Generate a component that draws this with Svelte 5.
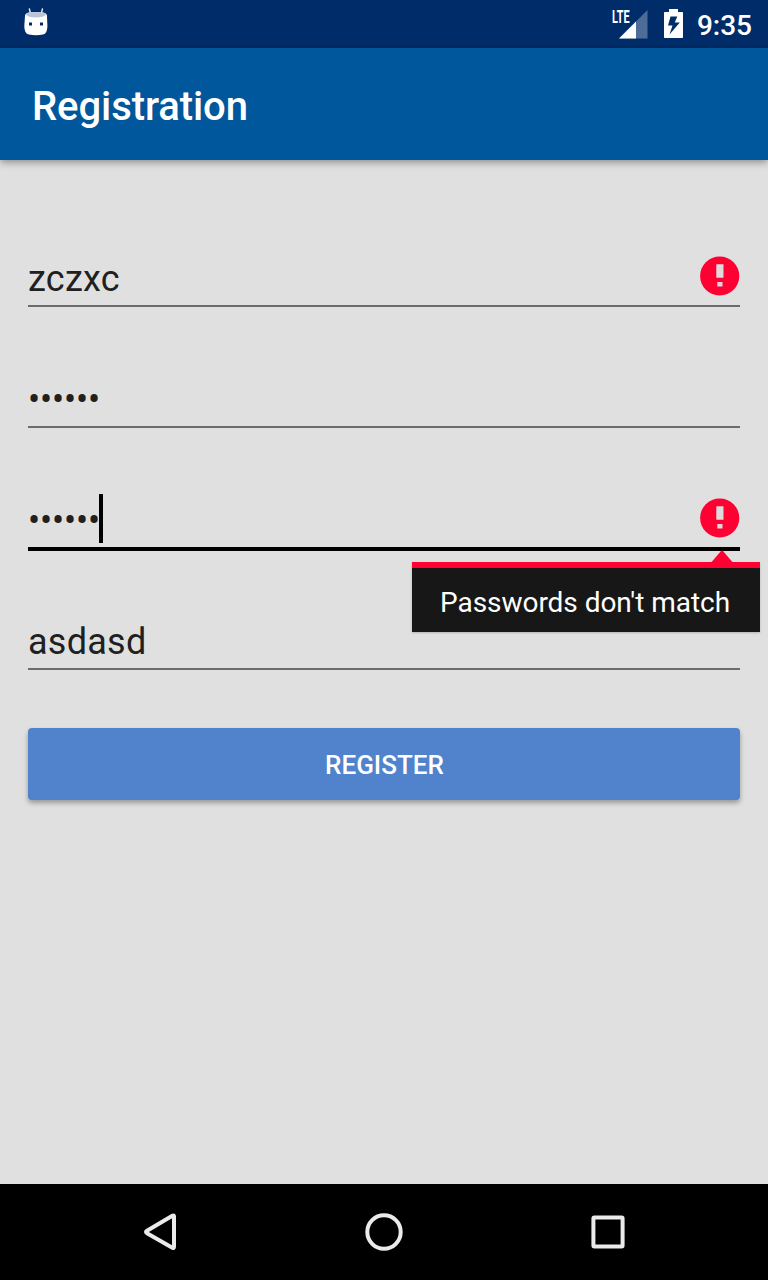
<script>
  const fields = [
    { value: 'zczxc', error: true },
    { value: '••••••', secret: true },
    { value: '••••••', secret: true, error: true, focused: true, message: "Passwords don't match" },
    { value: 'asdasd' }
  ];
</script>

<div class="screen">
  <div class="status">
    <svg class="robot" width="26" height="30" viewBox="0 0 26 30">
      <path d="M6.4 1 7.6 6M19.400 1 18.2 6" stroke="#e8edf5" stroke-width="1.4" stroke-linecap="round" />
      <path d="M2 8Q2 5 6 4.5Q13 3.500 20 4.500Q24 5 24 8L24.400 18Q24.400 25.500 20 26.600Q13 28 6 26.600Q1.200 25.500 1.300 18Z" fill="#fff" />
      <path d="M2.800 6.200Q4 4.800 6 4.500Q13 3.500 20 4.500Q22.500 4.800 23.200 6.200Q21 9.500 13 9.500Q5 9.500 2.800 6.200Z" fill="#b9c6da" />
      <path d="M6 14.500h3v3H6zM17 14.500h3v3h-3z" fill="#002d6a" />
    </svg>
    <div class="indicators">
      <div class="signal">
        <svg width="36" height="32" viewBox="0 0 36 32">
          <path d="M35.500 2V30.500H7Z" fill="#4d6c97" />
          <path d="M24 13.500V30.500H7Z" fill="#fff" />
        </svg>
        <span class="lte">LTE</span>
      </div>
      <svg class="battery" width="19" height="30" viewBox="0 0 19 30">
        <path fill="#fff" fill-rule="evenodd" d="M5 1H14V4H18.300Q19 4 19 4.700V29.300Q19 30 18.300 30H.7Q0 30 0 29.300V4.700Q0 4 .7 4H5ZM13.300 8.500H6.500L4 17.500H8.500L5.500 26.500L15.800 14.500H10.800Z" />
      </svg>
      <span class="clock">9:35</span>
    </div>
  </div>

  <header><h1>Registration</h1></header>

  <main>
    {#each fields as field}
      <div class="field" class:focused={field.focused}>
        <div class="value" class:secret={field.secret}><span>{field.value}</span>{#if field.focused}<i class="caret"></i>{/if}</div>
        {#if field.error}
          <svg class="alert" width="40" height="40" viewBox="0 0 40 40">
            <circle cx="19.700" cy="20" r="19.600" fill="#ff0033" />
            <path d="M16.300 8.200h7.200v13.600h-7.200zM17.300 26h5.200v4.600h-5.200z" fill="#e0d8da" />
          </svg>
        {/if}
        {#if field.message}
          <div class="popup">
            <svg class="arrow" width="22" height="12" viewBox="0 0 22 12"><path d="M.6 12 9.800 1.200Q11 0 12.200 1.200L21.400 12Z" fill="#ff0033" /></svg>
            <span>{field.message}</span>
          </div>
        {/if}
      </div>
    {/each}
    <button>REGISTER</button>
  </main>

  <nav>
    <svg width="48" height="48" viewBox="0 0 48 48"><path d="M38 8.600V38.800Q38 40.600 36.400 39.700L11 25.200Q9 24 11 22.800L36.400 7.700Q38 6.800 38 8.600Z" /></svg>
    <svg width="48" height="48" viewBox="0 0 48 48"><circle cx="24" cy="24" r="16.700" /></svg>
    <svg width="48" height="48" viewBox="0 0 48 48"><rect x="9.400" y="9.400" width="29.200" height="29.200" rx="1" /></svg>
  </nav>
</div>

<style>
  :global(body) { margin: 0; }
  .screen {
    width: 768px;
    height: 1280px;
    display: flex;
    flex-direction: column;
    overflow: hidden;
    background: #e0e0e0;
    font-family: Roboto, sans-serif;
  }
  .status {
    height: 48px;
    flex: none;
    box-sizing: border-box;
    padding: 8px 16px 0 23px;
    display: flex;
    justify-content: space-between;
    background: #002d6a;
    color: #fff;
  }
  .indicators { display: flex; }
  .signal { position: relative; width: 36px; margin-right: 16px; }
  .lte {
    position: absolute;
    left: 0;
    top: 1px;
    font-size: 17.5px;
    line-height: 16px;
    font-weight: 700;
    transform: scaleX(.62);
    transform-origin: 0 0;
  }
  .battery { margin-right: 14px; }
  .clock { font-size: 28px; line-height: 36px; font-weight: 500; }
  header {
    height: 112px;
    flex: none;
    box-sizing: border-box;
    padding: 0 32px;
    display: flex;
    align-items: center;
    background: #00579c;
    box-shadow: 0 2px 8px rgba(0, 0, 0, .4);
  }
  h1 { margin: 6px 0 0; color: #fff; font-size: 40px; line-height: 48px; font-weight: 500; letter-spacing: -.08px; }
  main { flex: 1; padding: 26px 28px 0; display: flex; flex-direction: column; }
  .field {
    position: relative;
    height: 121px;
    flex: none;
    box-sizing: border-box;
    padding-bottom: 4px;
    border-bottom: 2px solid #6c6c6c;
    display: flex;
    align-items: flex-end;
    justify-content: space-between;
  }
  .field.focused { height: 123px; margin-bottom: -2px; border-bottom: 4px solid #000; }
  .value { display: flex; align-items: flex-end; font-size: 36px; line-height: 42px; letter-spacing: .25px; color: #202020; }
  .value span { padding-bottom: 1px; }
  .value.secret { letter-spacing: -.15px; }
  .caret { width: 4px; height: 49px; margin-left: -1px; background: #000; }
  .alert { margin-bottom: 5px; }
  .popup {
    position: absolute;
    z-index: 1;
    right: -20px;
    top: 134px;
    width: 348px;
    height: 70px;
    box-sizing: border-box;
    border-top: 6px solid #ff0033;
    padding: 18px 0 0 28px;
    background: #171717;
    color: #fff;
    font-size: 28px;
    line-height: 34px;
    letter-spacing: -.04px;
    white-space: nowrap;
    box-shadow: 0 1px 2px rgba(0, 0, 0, .2);
  }
  .arrow { position: absolute; right: 27px; top: -18px; }
  button {
    height: 72px;
    margin: 58px 0 0;
    padding: 2px 0 0 1px;
    border: 0;
    border-radius: 4px;
    background: #5083cc;
    color: #fff;
    font: 500 26px/32px Roboto, sans-serif;
    box-shadow: 0 3px 5px rgba(0, 0, 0, .32);
  }
  nav {
    height: 96px;
    flex: none;
    box-sizing: border-box;
    padding: 0 136px;
    display: flex;
    align-items: center;
    justify-content: space-between;
    background: #000;
  }
  nav svg { fill: none; stroke: #ebebeb; stroke-width: 4; stroke-linejoin: round; }
</style>
